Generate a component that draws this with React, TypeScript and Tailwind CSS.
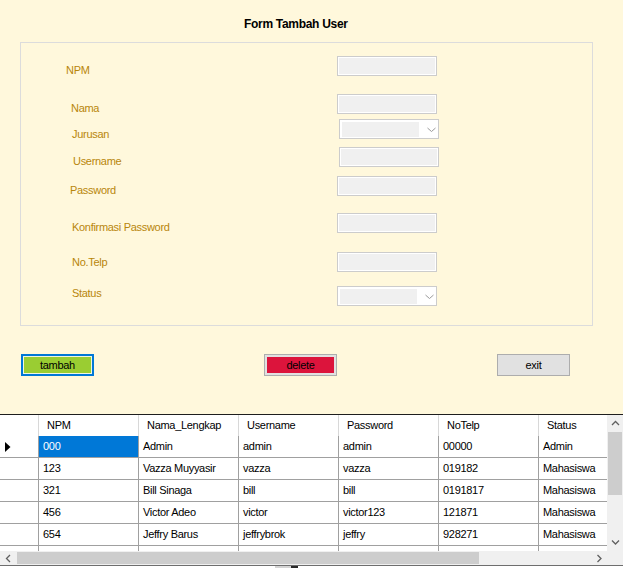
import React from "react";

type Field = { label: string; gap: number; lx: number; ly: number; left: number; combo?: boolean };

// posisi label dan input mengikuti form aslinya
const fields: Field[] = [
  { label: "NPM", gap: 13, lx: 45, ly: 7, left: 316 },
  { label: "Nama", gap: 18, lx: 50, ly: 7, left: 316 },
  { label: "Jurusan", gap: 5, lx: 51, ly: 8, left: 318, combo: true },
  { label: "Username", gap: 8, lx: 52, ly: 7, left: 318 },
  { label: "Password", gap: 9, lx: 49, ly: 7, left: 316 },
  { label: "Konfirmasi Password", gap: 17, lx: 51, ly: 7, left: 316 },
  { label: "No.Telp", gap: 19, lx: 51, ly: 3, left: 316 },
  { label: "Status", gap: 14, lx: 51, ly: 0, left: 316, combo: true },
];

const columns = ["NPM", "Nama_Lengkap", "Username", "Password", "NoTelp", "Status"];
const widths = ["w-[100px]", "w-[100px]", "w-[100px]", "w-[100px]", "w-[100px]", "w-[68px]"];

const users = [
  ["000", "Admin", "admin", "admin", "00000", "Admin"],
  ["123", "Vazza Muyyasir", "vazza", "vazza", "019182", "Mahasiswa"],
  ["321", "Bill Sinaga", "bill", "bill", "0191817", "Mahasiswa"],
  ["456", "Victor Adeo", "victor", "victor123", "121871", "Mahasiswa"],
  ["654", "Jeffry Barus", "jeffrybrok", "jeffry", "928271", "Mahasiswa"],
];

function Chevron({ dir, className = "" }: { dir: "up" | "down" | "left" | "right"; className?: string }) {
  const pts = {
    up: "1,6 4.5,2.5 8,6",
    down: "1,2.5 4.5,6 8,2.5",
    left: "6,1 2.5,4.5 6,8",
    right: "2.5,1 6,4.5 2.5,8",
  }[dir];
  return (
    <svg width="9" height="9" viewBox="0 0 9 9" className={className}>
      <polyline points={pts} fill="none" stroke="#606060" strokeWidth="1.3" />
    </svg>
  );
}

function TextBox() {
  return <div className="w-[100px] h-[20px] shrink-0 border border-[#cccccc] bg-[#f0f0f0] shadow-[inset_0_0_0_1px_#ffffff]" />;
}

function ComboBox() {
  return (
    <div className="w-[100px] h-[20px] shrink-0 border border-[#cccccc] bg-white flex items-start">
      <div className="ml-[2px] mt-[2px] w-[77px] h-[15px] bg-[#f0f0f0]" />
      <svg width="9" height="6" viewBox="0 0 9 6" className="ml-[8px] mt-[7px]">
        <polyline points="0.5,1 4.5,4.5 8.5,1" fill="none" stroke="#9a9a9a" strokeWidth="1" />
      </svg>
    </div>
  );
}

export default function App() {
  return (
    <div className="w-[623px] h-[568px] overflow-hidden bg-[#FFF8DC] flex flex-col font-['Liberation_Sans',Arial,sans-serif] text-[11px] tracking-[-0.3px] text-black">
      {/* judul */}
      <div className="h-[42px] pt-[17px] pl-[244px]">
        <span className="block text-[12px] leading-[14px] font-bold">Form Tambah User</span>
      </div>

      {/* group box form */}
      <div className="ml-[20px] w-[573px] h-[284px] shrink-0 border border-[#dcdcdc] flex flex-col">
        {fields.map((f) => (
          <div key={f.label} className="flex h-[20px] shrink-0" style={{ marginTop: f.gap }}>
            <div className="shrink-0" style={{ width: f.left }}>
              <span className="block leading-[14px] text-[#B8860B]" style={{ marginLeft: f.lx, marginTop: f.ly }}>
                {f.label}
              </span>
            </div>
            {f.combo ? <ComboBox /> : <TextBox />}
          </div>
        ))}
      </div>

      {/* tombol */}
      <div className="mt-[28px] h-[22px] shrink-0 flex">
        <button className="ml-[21px] w-[73px] h-[22px] border-2 border-[#0078d7] bg-[#9acd32] shadow-[inset_0_0_0_1px_#eef5e0] leading-none">
          tambah
        </button>
        <button className="ml-[170px] w-[73px] h-[22px] border border-[#adadad] bg-[#e1e1e1] p-[2px]">
          <span className="w-full h-full bg-[#dc143c] flex items-center justify-center">delete</span>
        </button>
        <button className="ml-[160px] w-[73px] h-[22px] border border-[#adadad] bg-[#e1e1e1] leading-none">exit</button>
      </div>

      {/* data grid */}
      <div className="mt-[38px] flex flex-col border-t border-[#1e1e1e] bg-white">
        <div className="flex h-[136px]">
          <div className="w-[607px] overflow-hidden flex flex-col">
            <div className="flex h-[21px] shrink-0">
              <div className="w-[39px] border-r border-[#d8d8d8]" />
              {columns.map((c, i) => (
                <div key={c} className={`${widths[i]} ${i < 5 ? "border-r border-[#d8d8d8]" : ""} pl-[8px] flex items-center`}>
                  {c}
                </div>
              ))}
            </div>
            {[...users, ["", "", "", "", "", ""]].map((u, r) => (
              <div key={r} className="flex h-[22px] shrink-0 border-b border-[#a0a0a0]">
                <div className="w-[39px] shrink-0 border-r border-[#a0a0a0] flex items-center pl-[5px]">
                  {r === 0 && (
                    <svg width="6" height="10" viewBox="0 0 6 10">
                      <polygon points="0,0 5.5,5 0,10" fill="#000" />
                    </svg>
                  )}
                </div>
                {u.map((v, i) => (
                  <div
                    key={i}
                    className={`${widths[i]} shrink-0 ${i < 5 ? "border-r border-[#a0a0a0]" : ""} pl-[4px] flex items-center ${
                      r === 0 && i === 0 ? "bg-[#0078d7] text-white" : ""
                    }`}
                  >
                    {v}
                  </div>
                ))}
              </div>
            ))}
          </div>

          {/* scrollbar vertikal */}
          <div className="w-[16px] bg-[#f0f0f0] flex flex-col">
            <div className="h-[17px] flex items-center justify-center">
              <Chevron dir="up" />
            </div>
            <div className="mx-px h-[63px] bg-[#cdcdcd]" />
            <div className="mt-auto h-[17px] flex items-center justify-center">
              <Chevron dir="down" />
            </div>
          </div>
        </div>

        {/* scrollbar horizontal */}
        <div className="flex h-[14px]">
          <div className="w-[607px] bg-[#f0f0f0] flex items-center">
            <div className="w-[16px] flex justify-center">
              <Chevron dir="left" />
            </div>
            <div className="ml-px w-[462px] h-[12px] bg-[#cdcdcd]" />
            <div className="ml-auto w-[16px] flex justify-center">
              <Chevron dir="right" />
            </div>
          </div>
          <div className="w-[16px] bg-[#f0f0f0]" />
        </div>
        <div className="h-px bg-[#6e6e6e]" />
        <div className="h-[2px] flex bg-white">
          <div className="ml-[275px] w-[16px] bg-[#d4d4d4]" />
          <div className="w-[7px] bg-[#2a2a2a]" />
        </div>
      </div>
    </div>
  );
}
